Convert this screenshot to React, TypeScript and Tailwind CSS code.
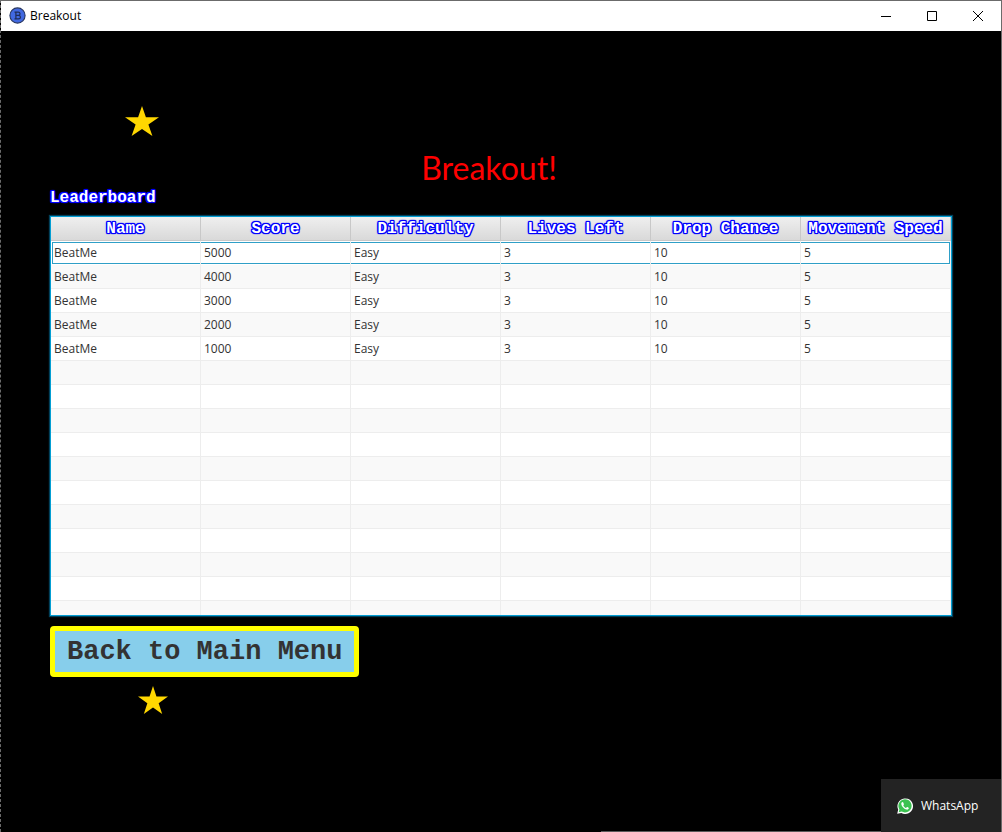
const columns = ["Name", "Score", "Difficulty", "Lives Left", "Drop Chance", "Movement Speed"];

const entries = ["5000", "4000", "3000", "2000", "1000"].map((score) => ["BeatMe", score, "Easy", "3", "10", "5"]);

const emptyRows = Array.from({ length: 11 }, (_, i) => i);

const outlined =
  "font-['Liberation_Mono','Courier_New',monospace] text-base font-bold text-white [text-shadow:1px_0_#00f,-1px_0_#00f,0_1px_#00f,0_-1px_#00f,1px_1px_#00f,-1px_-1px_#00f,1px_-1px_#00f,-1px_1px_#00f,0_0_2px_#00f,0_0_2px_#00f,0_0_2px_#00f,0_0_2px_#00f]";

function Star({ className }: { className: string }) {
  return (
    <svg aria-hidden="true" viewBox="0 0 34 30" preserveAspectRatio="none" className={className}>
      <path
        fill="#ffd700"
        d="M17 0 L20.9 11.3 L34 11.3 L23.4 18.6 L27.4 30 L17 23 L6.6 30 L10.6 18.6 L0 11.3 L13.1 11.3 Z"
      />
    </svg>
  );
}

function TitleBar() {
  const button = "flex h-full w-[46px] items-center justify-center";
  return (
    <header className="flex h-[30px] items-center justify-between bg-white pl-2 text-black">
      <div className="flex items-center gap-1 pb-px">
        <svg aria-hidden="true" width="17" height="17" viewBox="0 0 17 17">
          <circle cx="8.5" cy="8.5" r="7.6" fill="#4169e1" stroke="#26355f" strokeWidth="1.1" />
          <path
            d="M5.500 5.2h3.700c2.400 0 2.400 3 .3 3.200 2.700.2 2.600 3.500-.1 3.500H5.500M6.900 5.200v6.700M6.900 8.400h2.600"
            fill="none"
            stroke="#1f2d57"
            strokeWidth="1.2"
          />
        </svg>
        <h1 className="text-xs">Breakout</h1>
      </div>
      <div className="flex h-full pb-px">
        <button type="button" aria-label="Minimize" className={button}>
          <svg width="10" height="10" viewBox="0 0 10 10">
            <path d="M0 5.5h10" stroke="#000" />
          </svg>
        </button>
        <button type="button" aria-label="Maximize" className={button}>
          <svg width="10" height="10" viewBox="0 0 10 10">
            <path d="M.5.5h9v9h-9z" fill="none" stroke="#000" />
          </svg>
        </button>
        <button type="button" aria-label="Close" className={button}>
          <svg width="10" height="10" viewBox="0 0 10 10">
            <path d="M0 0l10 10M10 0L0 10" stroke="#000" />
          </svg>
        </button>
      </div>
    </header>
  );
}

function Leaderboard() {
  const cell = "h-6 border-r border-b border-[#ededed] p-0 pl-[3px] align-middle";
  return (
    <div className="h-[400px] overflow-hidden border border-[#039ed3] bg-white shadow-[0_0_1px_1px_#02405a]">
      <table aria-labelledby="board-title" className="w-full table-fixed border-separate border-spacing-0 text-xs text-[#333]">
        <thead>
          <tr>
            {columns.map((name) => (
              <th
                key={name}
                scope="col"
                className="h-6 border-r border-b border-[#c8c8c8] bg-linear-to-b from-[#efefef] to-[#d9d9d9] p-0 pt-px text-center align-middle"
              >
                <span className={`block whitespace-nowrap leading-[22px] ${outlined}`}>{name}</span>
              </th>
            ))}
          </tr>
        </thead>
        <tbody>
          {entries.map((entry, row) => (
            <tr key={entry[1]} className="odd:bg-white even:bg-[#f9f9f9]">
              {entry.map((value, col) =>
                row === 0 ? (
                  <td key={col} className="group h-6 border-r border-[#ededed] p-0 align-middle">
                    <div className="my-px flex h-[22px] items-center border-y border-[#2f9fc7] pl-[3px] group-first:ml-px group-first:border-l group-first:pl-px group-last:border-r">
                      {value}
                    </div>
                  </td>
                ) : (
                  <td key={col} className={cell}>
                    {value}
                  </td>
                ),
              )}
            </tr>
          ))}
          {emptyRows.map((row) => (
            <tr key={row} className="odd:bg-white even:bg-[#f9f9f9]">
              {columns.map((name) => (
                <td key={name} className={cell} />
              ))}
            </tr>
          ))}
        </tbody>
      </table>
    </div>
  );
}

function Toast() {
  return (
    <aside className="absolute -right-px bottom-0 flex h-[53px] w-[121px] items-center gap-2 bg-[#232323] pl-4 text-xs text-white">
      <svg aria-hidden="true" width="16" height="16" viewBox="0 0 16 16" className="shrink-0">
        <path d="M.2 15.8l1-4.2A7.8 7.8 0 1 1 4.4 15z" fill="#fff" />
        <path d="M1.7 14.3l.7-2.9A6.6 6.6 0 1 1 4.7 13.6z" fill="#3cc251" />
        <path
          d="M5.7 4.1c-.5-.1-1.6.7-1.4 1.9.4 2.600 3 5.100 5.300 5.600 1.300.2 2.300-.6 2.300-1.500 0-.3-1.600-1.100-1.900-1-.3.100-.7.9-1 .9-.8-.2-2.400-1.600-2.700-2.500 0-.3.600-.7.600-1.100 0-.3-.7-2.200-1.200-2.300z"
          fill="#fff"
        />
      </svg>
      <span>WhatsApp</span>
    </aside>
  );
}

export default function App() {
  return (
    <div className="relative flex min-h-screen flex-col overflow-hidden border-t border-r border-l border-t-[#6b6b6b] border-r-[#6b6b6b] border-l-[#6b6b6b] bg-black font-['Open_Sans','Noto_Sans',sans-serif] [border-left-style:dashed]">
      <TitleBar />
      <main className="flex flex-1 flex-col px-[49px] pt-[117px]">
        <h2 className="pr-6 text-center font-[Lato,'Open_Sans',sans-serif] text-[32px] leading-10 text-[#f00]">Breakout!</h2>
        <h3 id="board-title" className={`mb-2 leading-5 ${outlined}`}>
          Leaderboard
        </h3>
        <Leaderboard />
        <button
          type="button"
          className="mt-[10px] h-[51px] self-start rounded-[4px] border-5 border-[#ff0] bg-[#87ceeb] px-3 font-['Liberation_Mono','Courier_New',monospace] text-[27px] leading-10 font-bold text-[#333]"
        >
          Back to Main Menu
        </button>
      </main>
      <Star className="absolute top-[105px] left-[124px] h-[30px] w-[34px]" />
      <Star className="absolute top-[685px] left-[137px] h-[28px] w-[30px]" />
      <div className="absolute right-0 bottom-0 h-px w-2/5 bg-[#5a5a5a]" />
      <Toast />
    </div>
  );
}
